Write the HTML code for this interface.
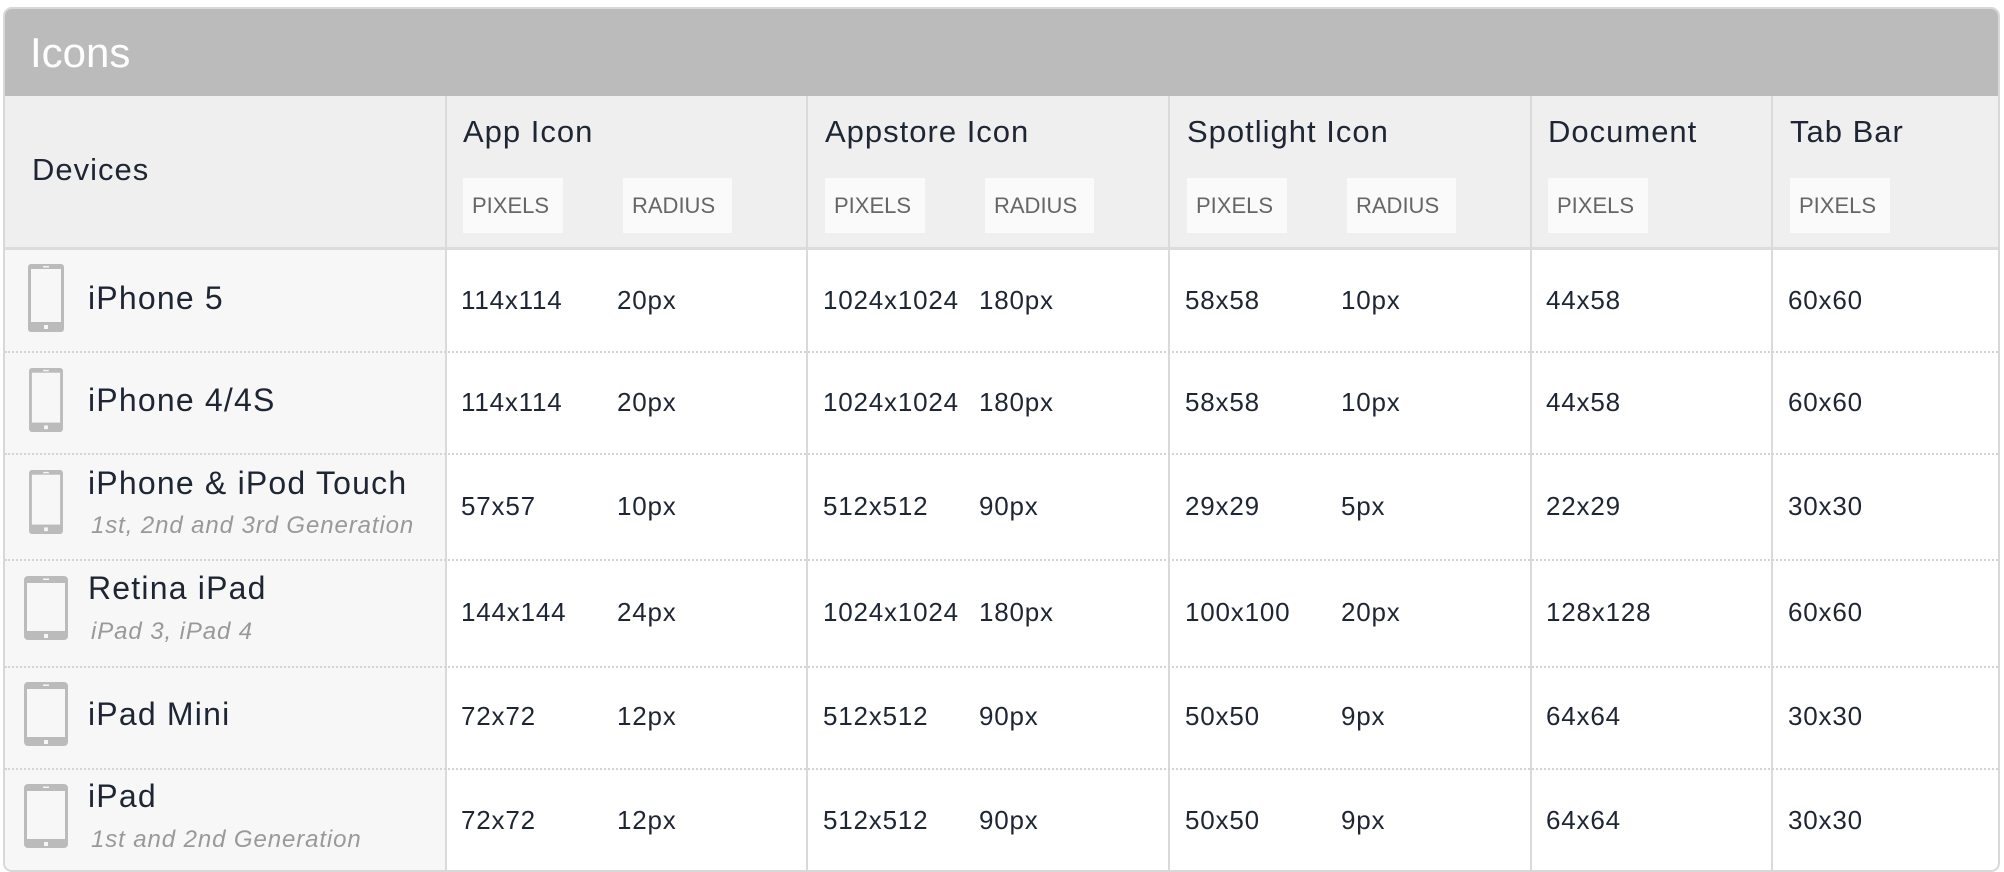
<!DOCTYPE html>
<html><head><meta charset="utf-8"><style>
*{margin:0;padding:0;box-sizing:border-box}
html,body{width:2004px;height:872px;overflow:hidden}
body{background:#fff;position:relative;font-family:"Liberation Sans",sans-serif;color:#1e2633}
.panel{position:absolute;left:3px;top:7px;width:1997px;height:865px;border:2px solid #d8d8d8;border-radius:9px;overflow:hidden;background:#fff}
.title{position:absolute;left:0;top:0;width:100%;height:87px;background:#bbbbbb;color:#fff;font-size:42px;font-weight:300;padding:20px 0 0 25px}
.hdr{position:absolute;left:0;top:87px;width:100%;height:154px;background:#efefef;border-bottom:3px solid #dcdcdc}
.devcol{position:absolute;left:0;top:241px;width:440px;height:660px;background:#f7f7f7}
.vl{position:absolute;top:87px;width:2px;height:800px;background:#dadada}
.hl{position:absolute;left:0;width:100%;border-top:2px dotted #d4d4d4}
.ht{position:absolute;top:105px;font-size:31px;color:#1e2633;letter-spacing:1px}
.bd{position:absolute;top:169px;height:55px;background:#fafafa;color:#666;font-size:22px;line-height:55px;padding:0 9px}
.v{position:absolute;font-size:26px;color:#1e2633;line-height:30px;letter-spacing:0.8px}
.dn{position:absolute;left:88px;font-size:32px;color:#1e2633;letter-spacing:1.2px}
.ds{position:absolute;left:91px;font-size:24px;font-style:italic;color:#999;letter-spacing:0.9px}
.ic{position:absolute}
</style></head><body>
<div class="panel">
<div class="title">Icons</div>
<div class="hdr"></div>
<div class="devcol"></div>
<div class="vl" style="left:440px"></div>
<div class="vl" style="left:801px"></div>
<div class="vl" style="left:1163px"></div>
<div class="vl" style="left:1525px"></div>
<div class="vl" style="left:1766px"></div>
<div class="hl" style="top:342px"></div>
<div class="hl" style="top:444px"></div>
<div class="hl" style="top:550px"></div>
<div class="hl" style="top:657px"></div>
<div class="hl" style="top:759px"></div>

<div class="ht" style="left:27px;top:143px">Devices</div>
<div class="ht" style="left:458px">App Icon</div>
<div class="ht" style="left:820px">Appstore Icon</div>
<div class="ht" style="left:1182px">Spotlight Icon</div>
<div class="ht" style="left:1543px">Document</div>
<div class="ht" style="left:1785px">Tab Bar</div>

<div class="bd" style="left:458px;width:100px">PIXELS</div>
<div class="bd" style="left:618px;width:109px">RADIUS</div>
<div class="bd" style="left:820px;width:100px">PIXELS</div>
<div class="bd" style="left:980px;width:109px">RADIUS</div>
<div class="bd" style="left:1182px;width:100px">PIXELS</div>
<div class="bd" style="left:1342px;width:109px">RADIUS</div>
<div class="bd" style="left:1543px;width:100px">PIXELS</div>
<div class="bd" style="left:1785px;width:100px">PIXELS</div>
</div>

<svg width="0" height="0" style="position:absolute"><defs>
<symbol id="ph" viewBox="0 0 36 68"><rect x="0" y="0" width="36" height="68" rx="3" fill="#bbb"/><rect x="3" y="5" width="30" height="53" fill="#f7f7f7"/><rect x="16" y="61" width="4" height="4" fill="#f7f7f7"/><rect x="15" y="2" width="6" height="1.5" fill="#f7f7f7"/></symbol>
<symbol id="pd" viewBox="0 0 44 64"><rect x="0" y="0" width="44" height="64" rx="4" fill="#bbb"/><rect x="3" y="7" width="38" height="48" fill="#f7f7f7"/><rect x="20" y="58" width="4" height="4" fill="#f7f7f7"/><rect x="19" y="2.5" width="6" height="1.5" fill="#f7f7f7"/></symbol>
</defs></svg>

<svg class="ic" style="left:28px;top:264px" width="36" height="68"><use href="#ph"/></svg>
<svg class="ic" style="left:28px;top:368px" width="36" height="64"><use href="#ph"/></svg>
<svg class="ic" style="left:28px;top:470px" width="36" height="64"><use href="#ph"/></svg>
<svg class="ic" style="left:24px;top:576px" width="44" height="64"><use href="#pd"/></svg>
<svg class="ic" style="left:24px;top:682px" width="44" height="64"><use href="#pd"/></svg>
<svg class="ic" style="left:24px;top:784px" width="44" height="64"><use href="#pd"/></svg>

<div class="dn" style="top:280px">iPhone 5</div>
<div class="dn" style="top:382px">iPhone 4/4S</div>
<div class="dn" style="top:465px">iPhone &amp; iPod Touch</div>
<div class="ds" style="top:512px">1st, 2nd and 3rd Generation</div>
<div class="dn" style="top:570px">Retina iPad</div>
<div class="ds" style="top:618px">iPad 3, iPad 4</div>
<div class="dn" style="top:696px">iPad Mini</div>
<div class="dn" style="top:778px">iPad</div>
<div class="ds" style="top:826px">1st and 2nd Generation</div>

<div style="position:absolute;left:0;top:0">
<div class="v" style="left:461px;top:285px">114x114</div><div class="v" style="left:617px;top:285px">20px</div>
<div class="v" style="left:823px;top:285px">1024x1024</div><div class="v" style="left:979px;top:285px">180px</div>
<div class="v" style="left:1185px;top:285px">58x58</div><div class="v" style="left:1341px;top:285px">10px</div>
<div class="v" style="left:1546px;top:285px">44x58</div><div class="v" style="left:1788px;top:285px">60x60</div>
<div class="v" style="left:461px;top:387px">114x114</div><div class="v" style="left:617px;top:387px">20px</div>
<div class="v" style="left:823px;top:387px">1024x1024</div><div class="v" style="left:979px;top:387px">180px</div>
<div class="v" style="left:1185px;top:387px">58x58</div><div class="v" style="left:1341px;top:387px">10px</div>
<div class="v" style="left:1546px;top:387px">44x58</div><div class="v" style="left:1788px;top:387px">60x60</div>
<div class="v" style="left:461px;top:491px">57x57</div><div class="v" style="left:617px;top:491px">10px</div>
<div class="v" style="left:823px;top:491px">512x512</div><div class="v" style="left:979px;top:491px">90px</div>
<div class="v" style="left:1185px;top:491px">29x29</div><div class="v" style="left:1341px;top:491px">5px</div>
<div class="v" style="left:1546px;top:491px">22x29</div><div class="v" style="left:1788px;top:491px">30x30</div>
<div class="v" style="left:461px;top:597px">144x144</div><div class="v" style="left:617px;top:597px">24px</div>
<div class="v" style="left:823px;top:597px">1024x1024</div><div class="v" style="left:979px;top:597px">180px</div>
<div class="v" style="left:1185px;top:597px">100x100</div><div class="v" style="left:1341px;top:597px">20px</div>
<div class="v" style="left:1546px;top:597px">128x128</div><div class="v" style="left:1788px;top:597px">60x60</div>
<div class="v" style="left:461px;top:701px">72x72</div><div class="v" style="left:617px;top:701px">12px</div>
<div class="v" style="left:823px;top:701px">512x512</div><div class="v" style="left:979px;top:701px">90px</div>
<div class="v" style="left:1185px;top:701px">50x50</div><div class="v" style="left:1341px;top:701px">9px</div>
<div class="v" style="left:1546px;top:701px">64x64</div><div class="v" style="left:1788px;top:701px">30x30</div>
<div class="v" style="left:461px;top:805px">72x72</div><div class="v" style="left:617px;top:805px">12px</div>
<div class="v" style="left:823px;top:805px">512x512</div><div class="v" style="left:979px;top:805px">90px</div>
<div class="v" style="left:1185px;top:805px">50x50</div><div class="v" style="left:1341px;top:805px">9px</div>
<div class="v" style="left:1546px;top:805px">64x64</div><div class="v" style="left:1788px;top:805px">30x30</div>
</div>
</body></html>
